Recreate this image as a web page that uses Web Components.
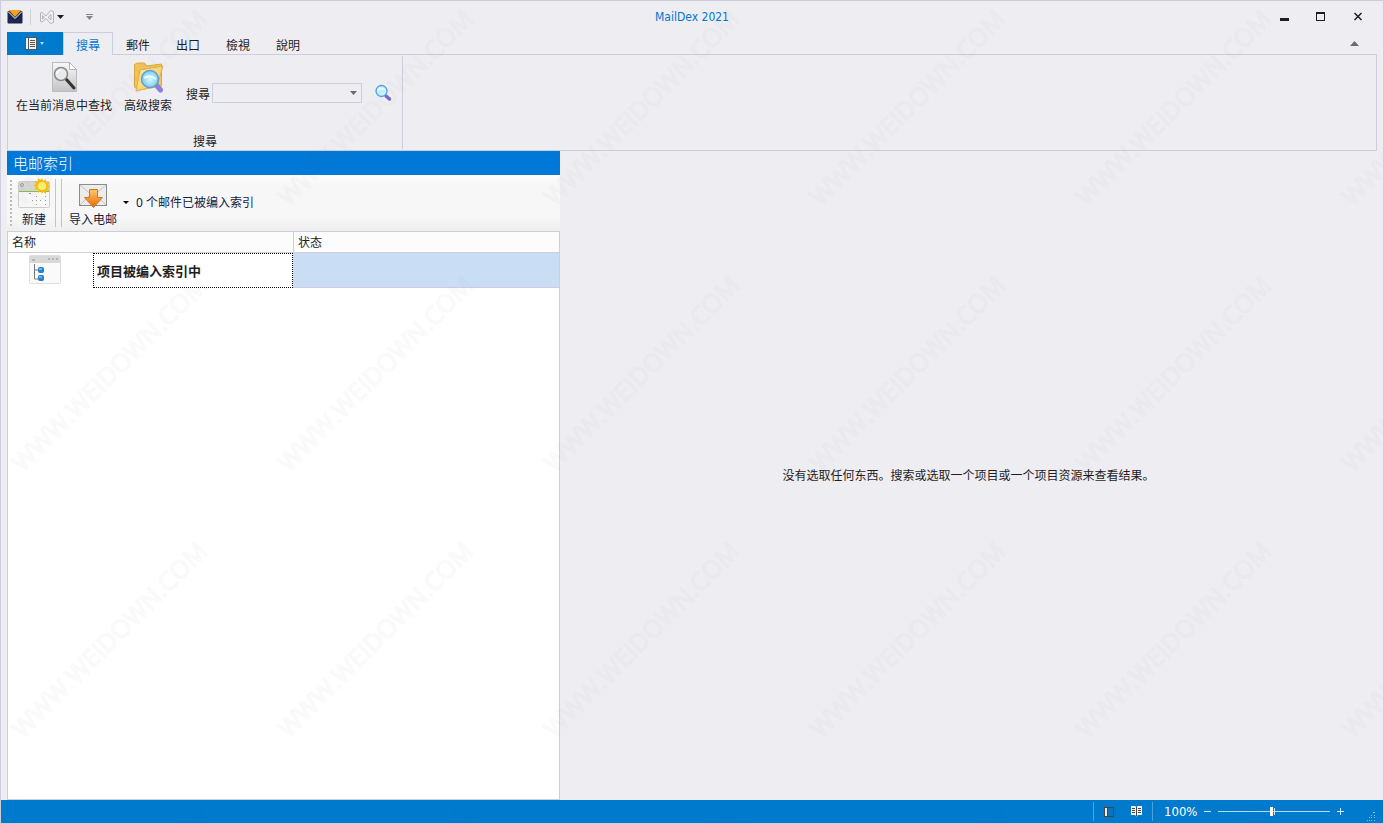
<!DOCTYPE html>
<html lang="zh-CN">
<head>
<meta charset="utf-8">
<title>MailDex 2021</title>
<style>
body { margin: 0; font: 12px/16px "Noto Sans", "Noto Sans CJK SC", sans-serif; color: #1e1e1e; background: #eeedf2; }
</style>
</head>
<body>
<mail-app></mail-app>

<script>
const base = `
  * { box-sizing: border-box; }
  button { font: inherit; color: inherit; background: none; border: 0; padding: 0; margin: 0; }
  svg { display: block; flex: none; }
`;
function define(name, css, html) {
  customElements.define(name, class extends HTMLElement {
    constructor() {
      super();
      this.attachShadow({ mode: "open" }).innerHTML = `<style>${base}${css}</style>${html}`;
    }
  });
}

define("title-bar", `
  :host { display: grid; grid-template-columns: 1fr auto 1fr; align-items: center; height: 31px; padding: 0 6px; }
  .quick, .win { display: flex; align-items: center; }
  .win { justify-content: flex-end; gap: 26px; padding-right: 13px; }
  h1 { margin: 0; font: 12px/16px "DejaVu Sans Condensed", "Noto Sans", sans-serif; color: #0078d0; }
  .sep { width: 1px; height: 16px; background: #cccedb; margin: 0 8px 0 7px; }
  .more { margin-left: 21px; }
`, `
  <div class="quick">
    <svg width="16" height="14" viewBox="0 0 16 14"><rect x=".5" y="1" width="15" height="12.5" rx="1" fill="#1c2450"/><path d="M1.500 0h13L8 7z" fill="#f5a11c"/><path d="M1 1.500L8 8.500l7-7" fill="none" stroke="#fff" stroke-width="1"/></svg>
    <span class="sep"></span>
    <button aria-label="撤消"><svg width="25" height="16" viewBox="0 0 25 16"><path d="M1.500 4l1.500-.5 4 3.500 4.500-5.500 3 1v11l-3 1L7 9.500 3 13l-1.500-.5zM3.500 6.500v3.500L5.500 8.300zM12 5.500L9 8.300l3 2.700z" fill="#f1f0f4" stroke="#b4b4b8" stroke-width="1"/><path d="M18 6h7l-3.500 4z" fill="#1e1e1e"/></svg></button>
    <button class="more" aria-label="自定义"><svg width="9" height="8"><path d="M1 1h7v1H1zM1 3h7L4.500 7z" fill="#85858a"/></svg></button>
  </div>
  <h1>MailDex 2021</h1>
  <div class="win">
    <button aria-label="最小化"><svg width="10" height="12"><path d="M0 7h9v3H0z" fill="#1e1e1e"/></svg></button>
    <button aria-label="最大化"><svg width="10" height="10"><path d="M0 0h9v9H0zM1 2v6h7V2z" fill="#1e1e1e" fill-rule="evenodd"/></svg></button>
    <button aria-label="关闭"><svg width="12" height="10"><path d="M2.500 1l7 7M9.500 1l-7 7" stroke="#1e1e1e" stroke-width="1.500"/></svg></button>
  </div>
`);

define("ribbon-tab", `
  :host { display: block; width: 50px; }
  button { width: 100%; height: 23px; border: 1px solid transparent; border-bottom: 0; font-family: "Noto Sans CJK TC", sans-serif; padding-top: 2px; }
  :host([active]) { position: relative; height: 23px; }
  :host([active]) button { color: #0078d0; background: #eeedf2; border-color: #cccedb; }
`, `<button role="tab"><slot></slot></button>`);

define("ribbon-tabs", `
  :host { display: flex; height: 22px; align-items: flex-start; position: relative; }
  .file { width: 56px; height: 23px; background: #007acc; display: flex; align-items: center; justify-content: center; gap: 3px; padding-right: 2px; }
  .fold { margin: 9px 18px 0 auto; }
`, `
  <button class="file" aria-label="文件">
    <svg width="12" height="13"><rect x=".5" y=".5" width="11" height="12" fill="#f2f2f2" stroke="#555"/><path d="M3.500 1v11" stroke="#555"/><path d="M5 3.500h5M5 5.500h5M5 7.500h5M5 9.500h5" stroke="#555"/></svg>
    <svg width="4" height="3"><path d="M0 0h4L2 3z" fill="#b5d9f0"/></svg>
  </button>
  <ribbon-tab active>搜尋</ribbon-tab><ribbon-tab>郵件</ribbon-tab><ribbon-tab>出口</ribbon-tab><ribbon-tab>檢視</ribbon-tab><ribbon-tab>說明</ribbon-tab>
  <button class="fold" aria-label="折叠功能区"><svg width="9" height="6"><path d="M0 5h9L4.500 0z" fill="#6c6c70"/></svg></button>
`);

define("tool-button", `
  :host { display: block; }
  button { display: flex; flex-direction: column; align-items: center; gap: var(--gap, 5px); white-space: nowrap; }
`, `<button><slot name="icon"></slot><span><slot></slot></span></button>`);

define("search-ribbon", `
  :host { display: flex; height: 97px; border: 1px solid #cccedb; padding: 1px 0; }
  .group { display: flex; flex-direction: column; justify-content: space-between; width: 395px; border-right: 1px solid #cccedb; padding: 5px 8px 0 8px; }
  .tools { display: flex; gap: 12px; }
  .find { display: flex; align-items: center; gap: 2px; margin: 21px 0 0 2px; height: 22px; }
  label, .caption { font-family: "Noto Sans CJK TC", sans-serif; }
  .find label { padding-top: 2px; white-space: nowrap; }
  .find button { margin-left: 10px; }
  .caption { text-align: center; }
  select { appearance: none; font: inherit; width: 150px; height: 20px; padding: 0 20px 0 4px; border: 1px solid #cccedb; border-radius: 0;
    background: #eeedf2 url('data:image/svg+xml,<svg xmlns="http://www.w3.org/2000/svg" width="7" height="4"><path d="M0 0h7L3.500 4z" fill="%236c6c70"/></svg>') no-repeat right 4px center; }
`, `
  <div class="group">
    <div class="tools">
      <tool-button>
        <svg slot="icon" width="32" height="32" viewBox="0 0 32 32"><defs><linearGradient id="p" x1="0" y1="0" x2="0" y2="1"><stop stop-color="#f8f8f8"/><stop offset="1" stop-color="#c4c4c4"/></linearGradient></defs>
          <path d="M4.500 1.500h17l7 7v22h-24z" fill="url(#p)" stroke="#bcbcbc"/><path d="M21.500 1.500v7h7z" fill="#fff" stroke="#b0b0b0"/><path d="M18 18l8 9" stroke="#333" stroke-width="3" stroke-linecap="round"/><circle cx="13" cy="13" r="6.500" fill="#e9eaeb" stroke="#888" stroke-width="1.500"/><path d="M9 13a4 4 0 0 1 4-4" stroke="#fff" stroke-width="1.500" fill="none"/></svg>
        在当前消息中查找</tool-button>
      <tool-button>
        <svg slot="icon" width="32" height="32" viewBox="0 0 32 32"><defs><linearGradient id="f" x1="0" y1="0" x2="1" y2="1"><stop stop-color="#fff3b0"/><stop offset="1" stop-color="#f3bf45"/></linearGradient><radialGradient id="g"><stop stop-color="#d8fbff"/><stop offset="1" stop-color="#82cdf0"/></radialGradient></defs>
          <path d="M2.500 5V3.500l3-1.500h7l2 3 15-2v22l-23 4-4-3z" fill="#f2c55a" stroke="#dba83c"/><path d="M8 9l23-4-6 20-21 5z" fill="url(#f)" stroke="#e2af43"/><path d="M25.500 25.500l3 3.500" stroke="#8d80dc" stroke-width="5" stroke-linecap="round"/><circle cx="18" cy="18" r="8.500" fill="url(#g)" stroke="#5d9fd9" stroke-width="1.500"/><path d="M12 17q6-4 12 1" stroke="#effeff" stroke-width="2" fill="none"/></svg>
        高级搜索</tool-button>
      <div class="find">
        <label for="q">搜尋</label>
        <select id="q"><option></option></select>
        <button aria-label="搜尋"><svg width="18" height="18" viewBox="0 0 18 18"><path d="M12 12l3.500 3" stroke="#7467cc" stroke-width="3.500" stroke-linecap="round"/><circle cx="7.500" cy="7" r="5.500" fill="#c4f1fd" stroke="#4c9fe3" stroke-width="1.300"/><path d="M4 6q3-3 7 0" stroke="#fff" stroke-width="1.500" fill="none"/></svg></button>
      </div>
    </div>
    <div class="caption">搜尋</div>
  </div>
`);

define("index-table", `
  :host { display: block; }
  table { width: 100%; table-layout: fixed; border-collapse: separate; border-spacing: 0; }
  .c1 { width: 85px; } .c2 { width: 200px; }
  th { height: 22px; padding: 2px 4px 0; font-weight: 400; text-align: left; background: #fcfcfc; border: solid #cccedb; border-width: 1px 0; }
  th + th { border-left-width: 1px; }
  td { height: 35px; padding: 0; border-bottom: 1px solid #cccedb; }
  .icon { border-bottom-color: transparent; padding-left: 21px; }
  .name { font-size: 13px; font-weight: 700; padding: 0 3px; border: 1px dotted #000; }
  .state { background: #c9def5; }
`, `
  <table>
    <colgroup><col class="c1"><col class="c2"><col></colgroup>
    <thead><tr><th colspan="2" scope="col">名称</th><th scope="col">状态</th></tr></thead>
    <tbody><tr>
      <td class="icon"><svg width="32" height="30"><rect x=".5" y=".5" width="31" height="28" rx="1" fill="#fafafa" stroke="#dedede"/><path d="M1 1h30v7H1z" fill="#d8d8d8"/><path d="M3 5h3M19 4h2M23 4h2M27 4h2" stroke="#b4b4b4" stroke-width="2"/><path d="M5.500 9v15H9M5.500 15H9" fill="none" stroke="#777"/><g fill="#2186d5" stroke="#2a7dc4"><rect x="9.500" y="12.500" width="5" height="5" rx="1"/><rect x="9.500" y="20.500" width="5" height="5" rx="1"/></g><path d="M10 14h3M10 22h3" stroke="#bce5ff"/></svg></td>
      <td class="name">项目被编入索引中</td>
      <td class="state"></td>
    </tr></tbody>
  </table>
`);

define("index-panel", `
  :host { display: flex; flex-direction: column; background: #fff; }
  h2 { margin: 0; height: 24px; padding: 0 6px; font: 300 15px/24px "Noto Sans CJK SC", sans-serif; color: #fff; background: #0078d7; }
  .bar { --gap: 3px; display: flex; align-items: center; height: 56px; padding: 0 3px; color: #14213d; background: linear-gradient(#fcfcfc, #f7f7f7 20%, #f7f7f7 75%, #efefef); }
  .grip { width: 2px; height: 47px; background: repeating-linear-gradient(#bbb 0 2px, transparent 2px 4px); margin-right: 6px; }
  .rule { width: 7px; height: 48px; border: solid #c4c4c4; border-width: 0 1px; margin: 0 7px 0 5px; }
  .drop { margin: 0 7px 0 6px; }
  .list { flex: 1; border: solid #cccedb; border-width: 0 1px 1px; }
`, `
  <h2>电邮索引</h2>
  <div class="bar">
    <span class="grip"></span>
    <tool-button>
      <svg slot="icon" width="32" height="31" viewBox="0 0 32 31"><rect x=".5" y="3.500" width="31" height="26" rx="1" fill="#f7f7f7" stroke="#ccc"/><path d="M1 4h30v9H1z" fill="#d6d6d6"/><path d="M1 13h30v1H1z" fill="#8bbf42"/><circle cx="4" cy="7" r="1.500" fill="none" stroke="#999"/><path d="M11 15h2v1h-2zM18 18h1v1h-1zM27 18h1v1h-1zM14 22h1v1h-1zM18 22h1v1h-1zM22 22h1v1h-1zM27 22h1v1h-1zM18 26h1v1h-1zM27 26h1v1h-1z" fill="#999"/><path d="M24 0l1.300 3 2.700-2 .2 3.400 3.300-.4-1.500 3 3 1.500-3 1.500 1.500 3-3.300-.4-.2 3.400-2.700-2L24 16l-1.300-3-2.700 2-.2-3.400-3.300.4 1.500-3-3-1.500 3-1.500-1.500-3 3.300.4.2-3.400 2.700 2z" fill="#f6bd17"/><circle cx="24" cy="8" r="4" fill="#fff16d"/></svg>
      新建</tool-button>
    <span class="rule"></span>
    <tool-button>
      <svg slot="icon" width="32" height="31" viewBox="0 0 32 31"><defs><linearGradient id="o" x1="0" y1="0" x2="0" y2="1"><stop stop-color="#ffc66a"/><stop offset="1" stop-color="#e76a08"/></linearGradient></defs><rect x="2.500" y="6.500" width="27" height="21" fill="#ececec" stroke="#8b8b8b"/><path d="M3 7l13 11L29 7M3 27l10-10M29 27L19 17" fill="none" stroke="#c4c4c4"/><path d="M12.500 11.500h8v8h5L16.500 29.500l-9-10h5z" fill="url(#o)" stroke="#d67420"/></svg>
      导入电邮</tool-button>
    <button class="drop" aria-label="更多导入"><svg width="6" height="4"><path d="M0 0h6L3 3z" fill="#000"/></svg></button>
    <span>0 个邮件已被编入索引</span>
  </div>
  <div class="list"><index-table></index-table></div>
`);

define("status-bar", `
  :host { display: flex; justify-content: flex-end; align-items: center; height: 23px; background: #007acc; color: #fff; font: 13px/16px "DejaVu Sans Condensed", "Noto Sans", sans-serif; }
  .sep { width: 1px; height: 19px; background: #4ca2dc; }
  .views { display: flex; gap: 16px; padding: 0 10px 0 9px; }
  .zoom { width: 51px; padding: 1px 0 0 11px; }
  .slider { display: grid; align-items: center; width: 112px; margin: 0 7px 0 6px; }
  .slider > * { grid-area: 1 / 1; }
  .tick { width: 1px; height: 7px; background: #d5eaf8; justify-self: center; }
  input { appearance: none; background: none; width: 100%; height: 13px; margin: 0; }
  input::-webkit-slider-runnable-track { height: 9px; background: linear-gradient(#b8dcf3, #b8dcf3) center / 100% 1px no-repeat; }
  input::-webkit-slider-thumb { appearance: none; width: 3px; height: 9px; background: #fff; }
  .grip { margin: 9px 7px 0 22px; }
`, `
  <span class="sep"></span>
  <div class="views">
    <button aria-label="普通视图"><svg width="12" height="10"><path d="M1 0h10v10H1z" fill="#444"/><path d="M2 1h2v8H2z" fill="#f5efe6"/><path d="M5 1h5v8H5z" fill="#0a74bd"/></svg></button>
    <button aria-label="阅读视图"><svg width="11" height="11"><path d="M0 0h4l1.500 1L7 0h4v9H7l-1.500 1.500L4 9H0z" fill="#f4f4f4"/><path d="M5.500 1v9M1 2.500h3M1 4.500h3M1 6.500h3M7 2.500h3M7 4.500h3M7 6.500h3" stroke="#444"/></svg></button>
  </div>
  <span class="sep"></span>
  <span class="zoom">100%</span>
  <button aria-label="缩小"><svg width="8" height="8"><path d="M0 3h7v1H0z" fill="#cfe7f7"/></svg></button>
  <div class="slider"><span class="tick"></span><input type="range" min="10" max="200" value="100" aria-label="缩放"></div>
  <button aria-label="放大"><svg width="8" height="8"><path d="M0 3h7v1H0zM3 0h1v7H3z" fill="#cfe7f7"/></svg></button>
  <svg class="grip" width="9" height="9"><path d="M6 0h2v1H6zM4 3h1v1H4zM7 3h1v1H7zM2 5h1v1H2zM4 5h1v1H4zM7 5h1v1H7zM0 8h1v1H0zM2 8h1v1H2zM4 8h1v1H4zM7 8h1v1H7z" fill="#7fbde6"/></svg>
`);

define("water-mark", `
  :host { display: grid; grid-template-columns: repeat(6, 266px); grid-auto-rows: 266px; position: absolute; inset: -27px 0 0 -25px; pointer-events: none; }
  span { place-self: center; white-space: nowrap; font: 500 25px/32px "Open Sans", sans-serif; color: transparent; -webkit-text-stroke: 2px rgba(110, 110, 120, .04); transform: rotate(-45deg); }
`, "<span>WWW.WEIDOWN.COM</span>".repeat(24));

define("mail-app", `
  :host { display: flex; flex-direction: column; position: relative; overflow: hidden; min-height: 100vh; border: 1px solid #cccedb; box-sizing: border-box; }
  ribbon-tabs, search-ribbon, .work { margin: 0 6px; }
  ribbon-tabs { z-index: 1; }
  .work { display: flex; flex: 1; }
  index-panel { flex: 553 1 0; }
  main { flex: 817 1 0; display: flex; align-items: center; justify-content: center; }
  p { margin: 0; }
`, `
  <title-bar></title-bar>
  <ribbon-tabs></ribbon-tabs>
  <search-ribbon></search-ribbon>
  <div class="work">
    <index-panel></index-panel>
    <main><p>没有选取任何东西。搜索或选取一个项目或一个项目资源来查看结果。</p></main>
  </div>
  <status-bar></status-bar>
  <water-mark aria-hidden="true"></water-mark>
`);
</script>
</body>
</html>
